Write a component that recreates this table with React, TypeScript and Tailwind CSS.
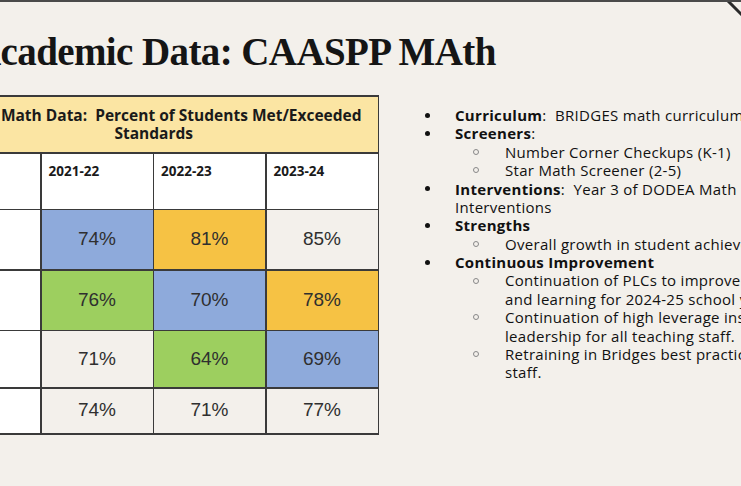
import React from "react";

const sans = { fontFamily: "'Open Sans', Lato, sans-serif" };

type Cell = { v: string; c: string };

const rows: Cell[][] = [
  [
    { v: "74%", c: "bg-[#8eaadb]" },
    { v: "81%", c: "bg-[#f6c244]" },
    { v: "85%", c: "bg-[#f3f0eb]" },
  ],
  [
    { v: "76%", c: "bg-[#9dcf5f]" },
    { v: "70%", c: "bg-[#8eaadb]" },
    { v: "78%", c: "bg-[#f6c244]" },
  ],
  [
    { v: "71%", c: "bg-[#f3f0eb]" },
    { v: "64%", c: "bg-[#9dcf5f]" },
    { v: "69%", c: "bg-[#8eaadb]" },
  ],
  [
    { v: "74%", c: "bg-[#f3f0eb]" },
    { v: "71%", c: "bg-[#f3f0eb]" },
    { v: "77%", c: "bg-[#f3f0eb]" },
  ],
];

function Bullet({ children }: { children: React.ReactNode }) {
  return (
    <div className="flex h-[18.4px] items-center whitespace-nowrap">
      <span className="ml-[46px] h-[5px] w-[5px] shrink-0 rounded-full bg-[#111]" />
      <span className="ml-[25px]">{children}</span>
    </div>
  );
}

function Sub({ children }: { children: React.ReactNode }) {
  return (
    <div className="flex h-[18.4px] items-center whitespace-nowrap">
      <span className="ml-[94px] h-[6px] w-[6px] shrink-0 rounded-full border border-[#888]" />
      <span className="ml-[26px]">{children}</span>
    </div>
  );
}

function Cont({ sub, children }: { sub?: boolean; children: React.ReactNode }) {
  return (
    <div
      className={`flex h-[18.4px] items-center whitespace-nowrap ${
        sub ? "pl-[126px]" : "pl-[76px]"
      }`}
    >
      {children}
    </div>
  );
}

export default function App() {
  return (
    <div className="relative h-[486px] w-[741px] overflow-hidden border-t-2 border-[#4a4a4a] bg-[#f3f0eb]">
      <svg
        className="absolute right-0 top-0"
        width="16"
        height="16"
        viewBox="0 0 16 16"
      >
        <line x1="3" y1="-1" x2="17" y2="13" stroke="#2a2a2a" strokeWidth="3" />
      </svg>

      <h1
        className="ml-[-27px] mt-[28px] h-[44px] whitespace-nowrap text-[39px] font-bold leading-[44px] tracking-[-0.6px] text-[#151515]"
        style={{ fontFamily: "'Liberation Serif', 'DejaVu Serif', serif" }}
      >
        Academic Data: CAASPP MAth
      </h1>

      <div className="mt-[21px] flex items-start">
        <div
          className="ml-[-72px] grid w-[451px] shrink-0 grid-cols-[110px_111px_111px_111px] grid-rows-[55px_55px_59px_59px_56px_44px] gap-[1.5px] border-2 border-[#3a3a3a] bg-[#3a3a3a]"
          style={sans}
        >
          <div className="col-span-4 flex flex-col justify-center bg-[#fbe5a3] pb-[2px] text-[15.5px] font-bold leading-[18px] text-[#1a1a1a]">
            <div className="whitespace-pre pr-[16px] text-right">
              {"Math Data:  Percent of Students Met/Exceeded"}
            </div>
            <div className="text-center">Standards</div>
          </div>

          <div className="bg-white" />
          {["2021-22", "2022-23", "2023-24"].map((y) => (
            <div
              key={y}
              className="bg-white pl-[7px] pt-[7px] text-[13.5px] font-bold text-[#1a1a1a]"
            >
              {y}
            </div>
          ))}

          {rows.map((r, i) => (
            <React.Fragment key={i}>
              <div className="bg-white" />
              {r.map((c, j) => (
                <div
                  key={j}
                  className={`flex items-center justify-center text-[19px] text-[#2f2f2f] ${c.c}`}
                  style={{ fontFamily: "'Liberation Sans', Arial, sans-serif" }}
                >
                  {c.v}
                </div>
              ))}
            </React.Fragment>
          ))}
        </div>

        <div className="mt-[11px] text-[15px] tracking-[0.3px] text-[#111]" style={sans}>
          <Bullet>
            <b>Curriculum</b>:&nbsp; BRIDGES math curriculum
          </Bullet>
          <Bullet>
            <b>Screeners</b>:
          </Bullet>
          <Sub>Number Corner Checkups (K-1)</Sub>
          <Sub>Star Math Screener (2-5)</Sub>
          <Bullet>
            <b>Interventions</b>:&nbsp; Year 3 of DODEA Math
          </Bullet>
          <Cont>Interventions</Cont>
          <Bullet>
            <b>Strengths</b>
          </Bullet>
          <Sub>Overall growth in student achievement</Sub>
          <Bullet>
            <b>Continuous Improvement</b>
          </Bullet>
          <Sub>Continuation of PLCs to improve teaching</Sub>
          <Cont sub>and learning for 2024-25 school year</Cont>
          <Sub>Continuation of high leverage instructional</Sub>
          <Cont sub>leadership for all teaching staff.</Cont>
          <Sub>Retraining in Bridges best practices for all</Sub>
          <Cont sub>staff.</Cont>
        </div>
      </div>
    </div>
  );
}
